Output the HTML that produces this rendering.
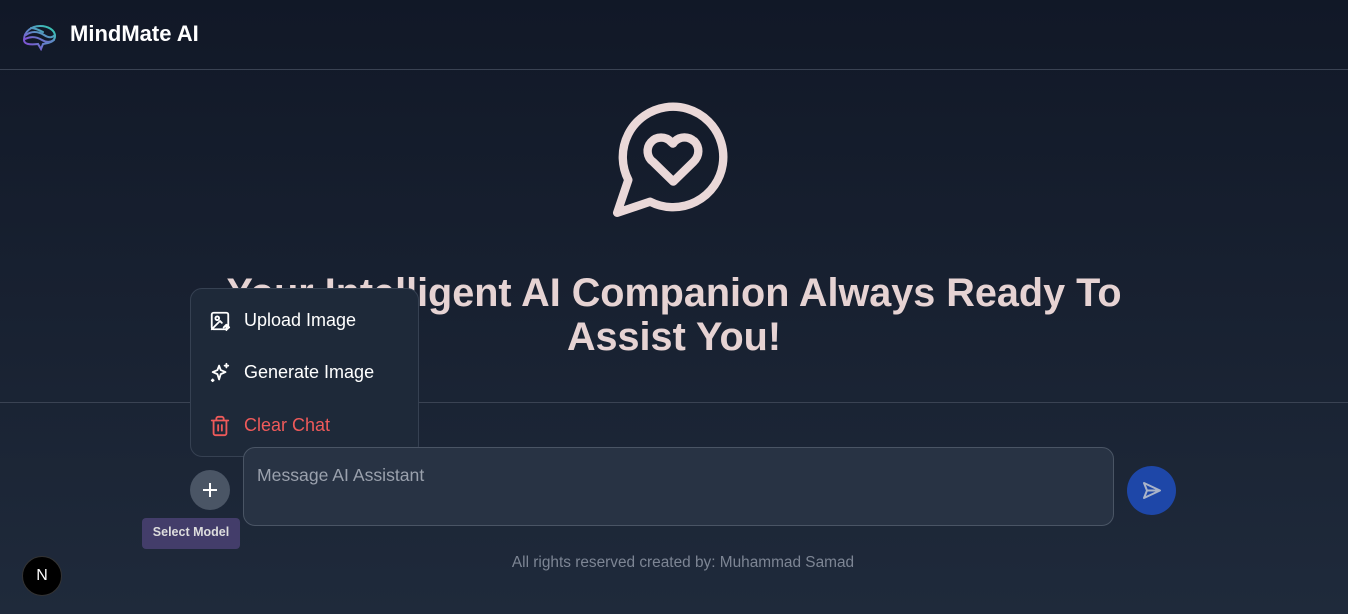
<!DOCTYPE html>
<html><head><style>
*{margin:0;padding:0;box-sizing:border-box}
body{width:1348px;height:614px;overflow:hidden;font-family:"Liberation Sans",sans-serif;background:linear-gradient(#111827,#1f2a3b);position:relative;color:#fff}
.hdr{position:absolute;left:0;top:0;width:1348px;height:70px;border-bottom:1px solid #3a4353}
.logo{position:absolute;left:22px;top:23px}
.brand{position:absolute;left:70px;top:21px;font-size:22px;font-weight:bold}
.big{position:absolute;left:606px;top:90px}
h1{position:absolute;left:0;width:1348px;top:271px;text-align:center;font-size:39.6px;line-height:44px;color:#e6d3d3;font-weight:bold}
.line2{position:absolute;left:0;top:402px;width:1348px;border-top:1px solid #3a4353}
.menu{position:absolute;left:190px;top:288px;width:229px;height:169px;background:#1e2939;border:1px solid #364152;border-radius:12px}
.it{position:absolute;left:53px;font-size:18px;color:#fff}
.ic{position:absolute;left:18px}
.inp{position:absolute;left:243px;top:447px;width:871px;height:79px;background:#283344;border:1px solid #4a5565;border-radius:12px}
.inp span{position:absolute;left:13px;top:17px;font-size:17.6px;color:#9aa1ad}
.plus{position:absolute;left:190px;top:470px;width:40px;height:40px;border-radius:50%;background:#4a5565}
.tip{position:absolute;left:142px;top:518px;width:98px;height:31px;background:#433d6a;border-radius:4px;font-size:12.5px;font-weight:bold;color:#ddd;text-align:center;line-height:29px}
.send{position:absolute;left:1127px;top:466px;width:49px;height:49px;border-radius:50%;background:#1e47a8}
.foot{position:absolute;left:18px;width:1330px;top:554px;text-align:center;font-size:15.4px;color:#7d8594}
.n{position:absolute;left:22px;top:556px;width:40px;height:40px;border-radius:50%;background:#000;border:1px solid #333;color:#fff;font-size:16px;text-align:center;line-height:38px}
</style></head><body>
<div class="hdr">
<svg class="logo" width="36" height="28" viewBox="0 0 36 28" fill="none" stroke-width="2" stroke-linecap="round"><defs><linearGradient id="g" x1="0" y1="1" x2="1" y2="0"><stop offset="0" stop-color="#8b3fd9"/><stop offset="1" stop-color="#2fd4b0"/></linearGradient></defs><path d="M2 17C2 8 10 3 18 3s15 4 15 10c0 4-3 6-7 7l-5 1-2 5-3-5C7 22 2 21 2 17Z" stroke="url(#g)"/><path d="M4 12c5-4 12-4 18 0s9 2 11 0M3 16c6-3 12-2 17 1s9 2 12 0M9 5c4 0 8 2 12 4" stroke="url(#g)"/></svg>
<div class="brand">MindMate AI</div></div>
<svg class="big" width="134" height="134" viewBox="0 0 24 24" fill="none" stroke="#ead8d8" stroke-width="1.5" stroke-linecap="round" stroke-linejoin="round"><path d="M7.9 20A9 9 0 1 0 4 16.1L2 22Z"/><path d="M15.8 9.2a2.5 2.5 0 0 0-3.5 0l-.3.4-.35-.3a2.42 2.42 0 1 0-3.2 3.6l3.6 3.5 3.6-3.5c1.2-1.2 1.1-2.7.2-3.7"/></svg>
<h1>Your Intelligent AI Companion Always Ready To<br>Assist You!</h1>
<div class="line2"></div>
<div class="menu">
<svg class="ic" style="top:21px" width="22" height="22" viewBox="0 0 24 24" fill="none" stroke="#fff" stroke-width="2" stroke-linecap="round" stroke-linejoin="round"><path d="M21 12v7a2 2 0 0 1-2 2H5a2 2 0 0 1-2-2V5a2 2 0 0 1 2-2h14a2 2 0 0 1 2 2v7"/><circle cx="9" cy="9" r="2"/><path d="m14 14-2-2-9 9M16 19l3-3 3 3M19 16v6"/></svg>
<div class="it" style="top:21px">Upload Image</div>
<svg class="ic" style="top:73px" width="22" height="22" viewBox="0 0 24 24" fill="none" stroke="#fff" stroke-width="2" stroke-linecap="round" stroke-linejoin="round"><path d="M11 4l1.8 4.8L18 11l-5.2 2.2L11 19l-1.8-5.8L4 11l5.2-2.2Z"/><path d="M19 2v4M17 4h4M4 19v2M3 20h2"/></svg>
<div class="it" style="top:73px">Generate Image</div>
<svg class="ic" style="top:126px" width="22" height="22" viewBox="0 0 24 24" fill="none" stroke="#ef5a5a" stroke-width="2" stroke-linecap="round" stroke-linejoin="round"><path d="M3 6h18M19 6v14a2 2 0 0 1-2 2H7a2 2 0 0 1-2-2V6M8 6V4a2 2 0 0 1 2-2h4a2 2 0 0 1 2 2v2M10 11v6M14 11v6"/></svg>
<div class="it" style="top:126px;color:#ef5a5a">Clear Chat</div>
</div>
<div class="plus"><svg width="40" height="40" viewBox="0 0 40 40" stroke="#fff" stroke-width="2"><path d="M20 13v14M13 20h14"/></svg></div>
<div class="tip">Select Model</div>
<div class="inp"><span>Message AI Assistant</span></div>
<div class="send"><svg width="49" height="49" viewBox="0 0 49 49" fill="none" stroke="#aab4c8" stroke-width="2" stroke-linejoin="round"><path d="M17 17l16 7.5L17 32l3-7.5Z M20 24.5h13"/></svg></div>
<div class="foot">All rights reserved created by: Muhammad Samad</div>
<div class="n">N</div>
</body></html>
